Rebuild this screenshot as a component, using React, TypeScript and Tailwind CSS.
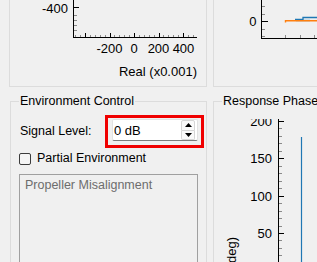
import React from 'react';

const px = (v: number) => Math.round(v) + 0.5;

function NyquistPlot() {
  // x ticks: major every 24.5px, minor every 4.9px
  const xTicks: { x: number; major: boolean }[] = [];
  for (let k = -2; k <= 22; k++) {
    const x = 85 + k * 4.9;
    if (x < 74 || x > 197) continue;
    xTicks.push({ x: px(x), major: k % 5 === 0 });
  }
  const labels = [
    { x: 109.5, t: '-200' },
    { x: 134, t: '0' },
    { x: 158.5, t: '200' },
    { x: 183.5, t: '400' },
  ];
  return (
    <svg width="196" height="86" className="block">
      <g transform="translate(-10,0)">
        <line x1="73.5" y1="0" x2="73.5" y2="38" stroke="#000" />
        <line x1="73" y1="37.5" x2="197" y2="37.5" stroke="#000" />
        <line x1="74" y1="7.5" x2="79" y2="7.5" stroke="#000" />
        {[15, 20, 25, 30].map((y) => (
          <line key={y} x1="74" y1={y + 0.5} x2="77" y2={y + 0.5} stroke="#8a8a8a" />
        ))}
        {xTicks.map((t) => (
          <line
            key={t.x}
            x1={t.x}
            y1="37"
            x2={t.x}
            y2={t.major ? 33 : 35}
            stroke={t.major ? '#000' : '#8a8a8a'}
          />
        ))}
        <text x="68" y="8" textAnchor="end" dominantBaseline="central" fontSize="13">
          -400
        </text>
        {labels.map((l) => (
          <text key={l.t} x={l.x} y="48" textAnchor="middle" dominantBaseline="central" fontSize="13">
            {l.t}
          </text>
        ))}
        <text x="197" y="71" textAnchor="end" dominantBaseline="central" fontSize="13">
          Real (x0.001)
        </text>
      </g>
    </svg>
  );
}

function MagnitudePlot() {
  return (
    <svg width="110" height="86" className="block">
      <g transform="translate(-214,0)">
        <line x1="261.5" y1="0" x2="261.5" y2="39" stroke="#000" />
        <line x1="261" y1="38.5" x2="317" y2="38.5" stroke="#000" />
        <line x1="262" y1="21.5" x2="268" y2="21.5" stroke="#000" />
        {[6, 14, 29, 36].map((y) => (
          <line key={y} x1="262" y1={y + 0.5} x2="265" y2={y + 0.5} stroke="#8a8a8a" />
        ))}
        {[285, 300, 314].map((x) => (
          <line key={x} x1={x + 0.5} y1="38" x2={x + 0.5} y2="35" stroke="#8a8a8a" />
        ))}
        <text x="256.5" y="21" textAnchor="end" dominantBaseline="central" fontSize="13">
          0
        </text>
        <polyline points="295,19.5 303,19.5 303,17.5 317,17.5" fill="none" stroke="#1f77b4" strokeWidth="1.3" />
        <polyline points="296,20.5 310,20.5" fill="none" stroke="#1f77b4" strokeWidth="1.3" />
        <polyline points="285.5,22.5 285.5,20.8 317,20.8" fill="none" stroke="#ff7f0e" strokeWidth="1.4" />
      </g>
    </svg>
  );
}

function PhasePlot() {
  const y = (v: number) => 233 - (v - 50) * 0.7467;
  const ticks: { v: number; major: boolean }[] = [];
  for (let v = 0; v <= 200; v += 10) ticks.push({ v, major: v % 50 === 0 });
  return (
    <svg width="136" height="150" className="block">
      <g transform="translate(-214,-119)">
        <line x1="278.5" y1="119" x2="278.5" y2="270" stroke="#000" />
        {ticks.map((t) => (
          <line
            key={t.v}
            x1="279"
            y1={px(y(t.v))}
            x2={t.major ? 284 : 282}
            y2={px(y(t.v))}
            stroke={t.major ? '#000' : '#8a8a8a'}
          />
        ))}
        {[200, 150, 100, 50].map((v) => (
          <text key={v} x="272" y={y(v) + 0.5} textAnchor="end" dominantBaseline="central" fontSize="13">
            {v}
          </text>
        ))}
        <line x1="301.5" y1="137" x2="301.5" y2="270" stroke="#1f77b4" strokeWidth="1.2" />
        <text transform="translate(236,237) rotate(-90)" textAnchor="end" fontSize="13">
          Phase (deg)
        </text>
      </g>
    </svg>
  );
}

export default function App() {
  return (
    <div className="w-[317px] h-[262px] overflow-hidden bg-[#f0f0f0] font-['Liberation_Sans',Arial,sans-serif] text-[12.5px] leading-[15px] text-black">
      {/* plots, scrolled so only their lower part shows */}
      <div className="flex gap-[6px] pl-[9px]">
        <div className="w-[198px] h-[87px] shrink-0 overflow-hidden border-x border-b border-[#dcdcdc]">
          <NyquistPlot />
        </div>
        <div className="w-[150px] h-[87px] shrink-0 overflow-hidden border-l border-b border-[#dcdcdc]">
          <MagnitudePlot />
        </div>
      </div>

      <div className="flex gap-[6px] pl-[10px] mt-[7px]">
        <fieldset className="w-[197px] h-[200px] shrink-0 border border-[#dcdcdc]">
          <legend className="ml-[8px] px-[1px] whitespace-nowrap">Environment Control</legend>

          <div className="flex items-center mt-[6px] pl-[9px]">
            <span className="w-[85px] shrink-0">Signal Level:</span>
            <div className="border-[3px] border-[#f00000] pt-[1px] pb-[4px] pl-[4px] pr-[3px]">
              <div className="w-[86px] h-[22px] flex items-center bg-white border border-[#e2e2e2] border-b-[#7d7d7d] rounded-[2px]">
                <span className="flex-1 pl-[1px] text-[13px]">0 dB</span>
                <div className="flex flex-col h-full w-[14px] mr-[2px]">
                  <div className="flex-1 flex items-center justify-center bg-[#fafafa] border border-[#d6d6d6] rounded-t-[2px]">
                    <svg width="7" height="4" viewBox="0 0 7 4">
                      <path d="M3.5 0 L7 4 L0 4 Z" fill="#000" />
                    </svg>
                  </div>
                  <div className="flex-1 flex items-center justify-center bg-[#fafafa] border border-t-0 border-[#d6d6d6] rounded-b-[2px]">
                    <svg width="7" height="4" viewBox="0 0 7 4">
                      <path d="M0 0 L7 0 L3.5 4 Z" fill="#000" />
                    </svg>
                  </div>
                </div>
              </div>
            </div>
          </div>

          <div className="flex items-center gap-[6px] h-[15px] mt-[3px] pl-[8px]">
            <span className="w-[12px] h-[12px] shrink-0 rounded-[2px] border border-[#3c3c3c] bg-[#f5f5f5]" />
            <span className="whitespace-nowrap">Partial Environment</span>
          </div>

          <div className="ml-[8px] mt-[8px] w-[179px] h-[100px] border border-[#a0a0a0] pl-[5px] pt-[3px] text-[#6d6d6d] whitespace-nowrap">
            Propeller Misalignment
          </div>
        </fieldset>

        <fieldset className="w-[150px] h-[200px] shrink-0 border border-[#dcdcdc]">
          <legend className="ml-[8px] px-[1px] whitespace-nowrap">Response Phase</legend>
          <div className="mt-[10px]">
            <PhasePlot />
          </div>
        </fieldset>
      </div>
    </div>
  );
}
